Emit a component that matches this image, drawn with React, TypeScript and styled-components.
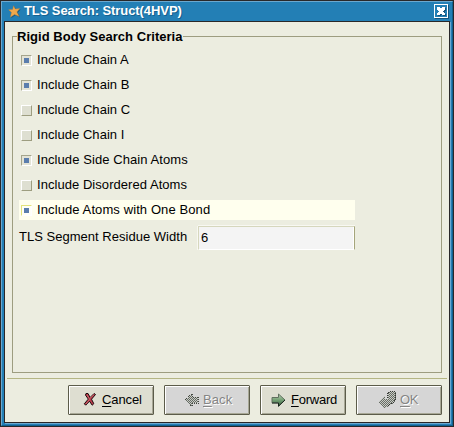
import React, { useState } from "react";
import styled, { createGlobalStyle, css } from "styled-components";

const GlobalStyle = createGlobalStyle`
  * { box-sizing: border-box; }
  body { margin: 0; overflow: hidden; background: #ecede0; }
`;

const Frame = styled.div`
  width: 454px;
  height: 427px;
  border: 1px solid #292829;
  background: #237fb5;
  font: 13px/20px "Liberation Sans", Arial, sans-serif;
  color: #000;
  user-select: none;
`;

const Bevel = styled.div`
  height: 425px;
  padding: 0 2px 2px 2px;
  border-style: solid;
  border-width: 1px;
  border-color: #6ba8cf #12608f #12608f #6ba8cf;
`;

const TitleBar = styled.header`
  display: flex;
  align-items: center;
  height: 19px;
  padding: 0 1px 0 4px;
  color: #fff;
  font-weight: bold;
`;

const TitleText = styled.h1`
  flex: 1;
  margin: 0 0 0 3px;
  padding-bottom: 2px;
  font-size: 13px;
  line-height: 17px;
  letter-spacing: -0.08px;
  text-shadow: 1px 1px 0 #14618f;
`;

const CloseButton = styled.button`
  display: block;
  width: 15px;
  height: 15px;
  padding: 0;
  border: 0;
  background: none;
  svg { display: block; }
`;

const Dialog = styled.main`
  display: flex;
  flex-direction: column;
  width: 446px;
  height: 402px;
  border: 1px solid #292829;
  background: #ecede0;
  box-shadow: 1px 1px 0 #6ba8cf;
`;

const Criteria = styled.fieldset`
  height: 344px;
  min-width: 0;
  margin: 7px 7px 0;
  padding: 0 0 0 6px;
  border: 1px solid #9d9d80;
`;

const Legend = styled.legend`
  height: 15px;
  margin-left: -2px;
  padding: 0;
  font-weight: bold;
  line-height: 15px;
  letter-spacing: 0.03px;
`;

const Options = styled.div`
  display: flex;
  flex-direction: column;
  gap: 5px;
  width: 336px;
  margin-top: 6px;
`;

const Option = styled.button<{ $hover?: boolean }>`
  display: flex;
  align-items: center;
  gap: 5px;
  height: 20px;
  padding: 0 0 0 2px;
  border: 0;
  background: ${(p) => (p.$hover ? "#ffffee" : "transparent")};
  font: inherit;
  color: inherit;
  text-align: left;
`;

const OptionLabel = styled.span<{ $track: number }>`
  letter-spacing: ${(p) => p.$track}px;
  line-height: 20px;
`;

const Box = styled.span<{ $on: boolean; $hover?: boolean }>`
  display: grid;
  place-items: center;
  width: 11px;
  height: 11px;
  border: 1px solid;
  ${(p) =>
    p.$on
      ? css`
          border-color: #a5a58c #fff #fff #a5a58c;
          background: #e3e3d6;
        `
      : css`
          border-color: #fff #9d9d80 #9d9d80 #fff;
          background: #dedfd1;
        `}
  ${(p) =>
    p.$hover &&
    css`
      border-color: #e3e37b #fff #fff #e3e37b;
      background: #fffff7;
    `}
`;

const Mark = styled.i`
  width: 5px;
  height: 5px;
  background: #5a7dad;
`;

const WidthRow = styled.label`
  display: flex;
  align-items: center;
  width: 337px;
  height: 25px;
  margin-top: 5px;
`;

const WidthLabel = styled.span`
  width: 179px;
  padding-bottom: 2px;
  letter-spacing: 0.02px;
`;

const Entry = styled.input`
  width: 157px;
  height: 24px;
  padding: 0 0 0 2px;
  border: 1px solid;
  border-color: #d6d7bd #a5a57b #fff #d6d7bd;
  border-radius: 0;
  outline: 0;
  background: #f4f4f4;
  box-shadow: inset -1px 0 #fff, 0 -1px #f8f8f2, -1px 0 #f8f8f2;
  font: inherit;
`;

const Separator = styled.hr`
  width: 440px;
  height: 1px;
  margin: 5px 2px 6px;
  border: 0;
  background: #b5b684;
`;

const Actions = styled.footer`
  display: flex;
  justify-content: flex-end;
  gap: 10px;
  padding-right: 7px;
`;

const ActionButton = styled.button<{ $off?: boolean; $inset: number; $gap: number }>`
  display: flex;
  align-items: center;
  gap: ${(p) => p.$gap}px;
  width: 86px;
  height: 30px;
  padding: 0 0 1px ${(p) => p.$inset}px;
  border: 1px solid #5c5c4a;
  border-radius: 1px;
  background: ${(p) => (p.$off ? "#d6d6d6" : "#deded1")};
  box-shadow: inset 1px 1px #fff, inset -1px -1px #a8a896;
  color: ${(p) => (p.$off ? "#858585" : "#000")};
  text-shadow: ${(p) => (p.$off ? "1px 1px 0 #fff" : "none")};
  font: inherit;
  svg { flex: none; }
`;

const Caption = styled.span<{ $track: number }>`
  letter-spacing: ${(p) => p.$track}px;
  u { text-underline-offset: 2px; text-decoration-thickness: 1px; }
`;

const StarIcon = () => (
  <svg width="13" height="13" viewBox="0 0 13 13">
    <path d="M5.6.7 7.3 4l4.5-.4-2.9 3.3 2.3 4.6-4.6-2.1-4.2 2.8 1-4.8L.6 4.8l4-.4z" fill="#174d70" transform="translate(.9 .9)" opacity=".75" />
    <path d="M5.6.7 7.3 4l4.5-.4-2.9 3.3 2.3 4.6-4.6-2.1-4.2 2.8 1-4.8L.6 4.8l4-.4z" fill="#f0a94c" stroke="#b07c3e" strokeWidth=".4" />
  </svg>
);

const CloseIcon = () => (
  <svg width="15" height="15" shapeRendering="crispEdges">
    <path d="M1 14h14V1" fill="none" stroke="#14547d" strokeWidth="2" />
    <path d="M.5.5h13v13H.5z" fill="#237fb5" stroke="#fff" />
    <path d="M4 4h3v1h2V4h3v3h-1v3h1v2H9v-1H7v1H4V9h1V7H4z" fill="#14547d" />
    <path d="M3 3h3v1h2V3h3v3h-1v1H9v1h1v1h1v2H8v-1H6v1H3V9h1V8h1V7H4V6H3z" fill="#fff" />
  </svg>
);

const CancelIcon = () => (
  <svg width="14" height="15" viewBox="0 0 14 15">
    <path d="M3 1.5h2l2.1 4 4-4 1.4 1-4 4.7 2.3 4.5-1.6 1.5-2.7-4-3.8 4-1.4-1.4 4-4.7-2.8-4z" fill="#bd3c4c" stroke="#180b0d" strokeLinejoin="bevel" />
    <path d="m4 3 2.6 4.1L3 12m4-6 4-3.4" fill="none" stroke="#d86b76" strokeWidth=".7" />
  </svg>
);

const Checker = ({ id }: { id: string }) => (
  <pattern id={id} width="2" height="2" patternUnits="userSpaceOnUse">
    <path d="M0 0h2v2H0z" fill="#c8cac5" />
    <path d="M0 0h1v1H0zM1 1h1v1H1z" fill="#666d64" />
  </pattern>
);

const BackIcon = () => (
  <svg width="14" height="14" viewBox="0 0 14 14" shapeRendering="crispEdges">
    <defs><Checker id="back-checker" /></defs>
    <path d="M0 7 7 0v4h6v6H7v4z" fill="url(#back-checker)" />
    <path d="M7 10.5h6.5V4M7 10v3L5 12M0 7l7-6.5V4h6" fill="none" stroke="#444942" strokeDasharray="1 1" />
  </svg>
);

const ForwardIcon = () => (
  <svg width="15" height="14" viewBox="0 0 15 14">
    <defs>
      <linearGradient id="forward-fill" x1="0" y1="0" x2="0" y2="1">
        <stop offset="0" stopColor="#b9cfb4" />
        <stop offset=".45" stopColor="#7aa579" />
        <stop offset="1" stopColor="#31613a" />
      </linearGradient>
    </defs>
    <path d="M1 4.5h6.5V1L14 7l-6.5 6.2V9.8H1z" fill="url(#forward-fill)" stroke="#60705f" />
    <path d="M1 10h6.5v3.2L14 7" fill="none" stroke="#17221a" />
  </svg>
);

const OkIcon = () => (
  <svg width="20" height="19" viewBox="0 0 20 19" shapeRendering="crispEdges">
    <defs><Checker id="ok-checker" /></defs>
    <path d="m1 12 7-6v3h3V3l2-2h5l1 2v6l-2 4-5 3-1 1H9v1H6v-2z" fill="url(#ok-checker)" />
    <path d="M10.5 8V3l2-1.500h5l1 1v6l-2 4-5 3" fill="none" stroke="#343733" strokeDasharray="1 1" />
  </svg>
);

const criteria = [
  { label: "Include Chain A", on: true, track: 0.05 },
  { label: "Include Chain B", on: true, track: 0.05 },
  { label: "Include Chain C", on: false, track: 0.05 },
  { label: "Include Chain I", on: false, track: 0.05 },
  { label: "Include Side Chain Atoms", on: true, track: 0.08 },
  { label: "Include Disordered Atoms", on: false, track: 0.05 },
  { label: "Include Atoms with One Bond", on: true, track: 0.1, hover: true },
];

export default function App() {
  const [checked, setChecked] = useState(criteria.map((c) => c.on));
  const [width, setWidth] = useState("6");
  const toggle = (index: number) =>
    setChecked((all) => all.map((on, i) => (i === index ? !on : on)));

  return (
    <>
      <GlobalStyle />
      <Frame>
        <Bevel>
          <TitleBar>
            <StarIcon />
            <TitleText>TLS Search: Struct(4HVP)</TitleText>
            <CloseButton aria-label="Close"><CloseIcon /></CloseButton>
          </TitleBar>
          <Dialog>
            <Criteria>
              <Legend>Rigid Body Search Criteria</Legend>
              <Options>
                {criteria.map((c, i) => (
                  <Option key={c.label} role="checkbox" aria-checked={checked[i]} $hover={c.hover} onClick={() => toggle(i)}>
                    <Box $on={checked[i]} $hover={c.hover}>{checked[i] && <Mark />}</Box>
                    <OptionLabel $track={c.track}>{c.label}</OptionLabel>
                  </Option>
                ))}
              </Options>
              <WidthRow>
                <WidthLabel>TLS Segment Residue Width</WidthLabel>
                <Entry value={width} onChange={(e) => setWidth(e.target.value)} />
              </WidthRow>
            </Criteria>
            <Separator />
            <Actions>
              <ActionButton $inset={14} $gap={5}><CancelIcon /><Caption $track={-0.1}><u>C</u>ancel</Caption></ActionButton>
              <ActionButton $off disabled $inset={20} $gap={4}><BackIcon /><Caption $track={0.1}><u>B</u>ack</Caption></ActionButton>
              <ActionButton $inset={10} $gap={5}><ForwardIcon /><Caption $track={-0.25}><u>F</u>orward</Caption></ActionButton>
              <ActionButton $off disabled $inset={20} $gap={3}><OkIcon /><Caption $track={-0.3}><u>O</u>K</Caption></ActionButton>
            </Actions>
          </Dialog>
        </Bevel>
      </Frame>
    </>
  );
}
